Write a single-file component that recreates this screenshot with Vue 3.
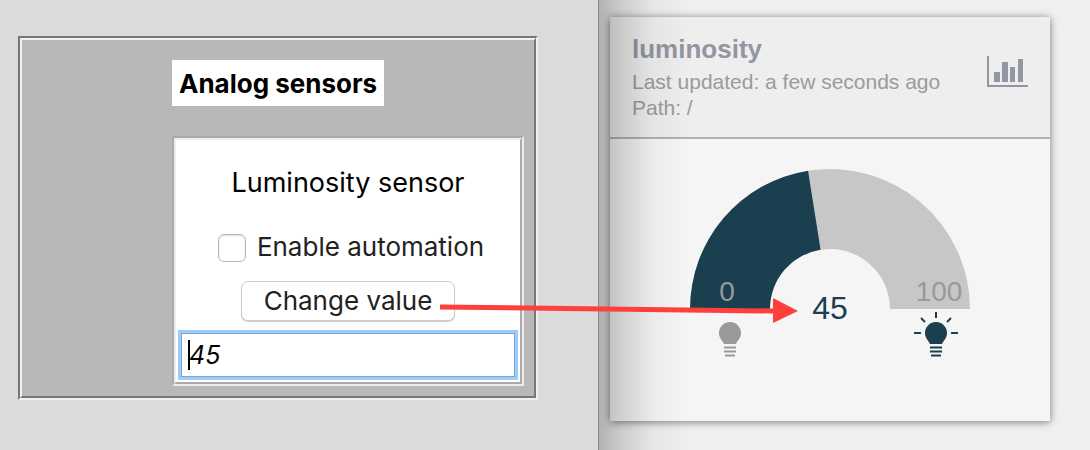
<script setup>
import { ref } from 'vue'

const automated = ref(false)
const value = ref('45')

const point = (radius, percent) => {
  const angle = (Math.PI * percent) / 100
  return `${140 - radius * Math.cos(angle)} ${140 - radius * Math.sin(angle)}`
}
const arc = (from, to) =>
  `M${point(140, from)}A140 140 0 0 1 ${point(140, to)}L${point(60, to)}A60 60 0 0 0 ${point(60, from)}Z`
</script>

<template>
  <main class="page">
    <section class="simulator">
      <div class="groove outer">
        <div class="groove-inner outer-body">
          <h1 class="group-title">Analog sensors</h1>
          <div class="groove sensor">
            <form class="groove-inner sensor-body" @submit.prevent>
              <h2 class="sensor-name">Luminosity sensor</h2>
              <label class="check"><input v-model="automated" type="checkbox" />Enable automation</label>
              <button class="change" type="button">Change value</button>
              <div class="field">
                <input v-model="value" class="value" type="text" aria-label="Luminosity value" />
                <span class="caret"></span>
              </div>
            </form>
          </div>
        </div>
      </div>
    </section>

    <section class="dashboard">
      <article class="card">
        <header class="card-head">
          <div>
            <h2 class="card-title">luminosity</h2>
            <p class="meta">Last updated: a few seconds ago</p>
            <p class="meta">Path: /</p>
          </div>
          <svg class="chart-icon" viewBox="0 0 41 32" aria-hidden="true">
            <path d="M0 0h2v29h39v2H0zM7 16h6v10H7zM15 6h6v20h-6zM23 11h5v15h-5zM31 3h5v23h-5z" />
          </svg>
        </header>
        <div class="card-body">
          <svg class="gauge" viewBox="0 0 280 190" role="img" aria-label="Luminosity 45 of 100">
            <path class="rest" :d="arc(45, 100)" />
            <path class="filled" :d="arc(0, 45)" />
            <text class="limit" x="37" y="132">0</text>
            <text class="limit" x="249" y="132">100</text>
            <text class="reading" x="140" y="150">45</text>
            <g class="bulb off" transform="translate(40 153)">
              <path d="M0 0A11 11 0 0 1 11 11C11 16 8 18 6 22H-6C-8 18-11 16-11 11A11 11 0 0 1 0 0Z" />
              <path class="screw" d="M-6 25.500H6M-6 29.500H6M-5 33.500H5" />
            </g>
            <g class="bulb on" transform="translate(246 153)">
              <path d="M0 0A11 11 0 0 1 11 11C11 16 8 18 6 22H-6C-8 18-11 16-11 11A11 11 0 0 1 0 0Z" />
              <path class="screw" d="M-6 25.500H6M-6 29.500H6M-5 33.500H5M0-4V-10M-11 0L-15-4M11 0L15-4M-15 11H-22M15 11H22" />
            </g>
          </svg>
        </div>
      </article>
      <div class="edge-shade"></div>
    </section>

    <svg class="arrow" viewBox="0 0 358 26" aria-hidden="true">
      <path d="M0 9L334 13" stroke="#ff3f3b" stroke-width="5" />
      <path d="M333 0L358 13L333 25Z" fill="#ff3f3b" />
    </svg>
  </main>
</template>

<style>
body {
  margin: 0;
}
</style>

<style scoped>
* {
  box-sizing: border-box;
}
h1,
h2,
p {
  margin: 0;
}
.page {
  position: relative;
  display: grid;
  grid-template-columns: minmax(0, 599fr) minmax(0, 491fr);
  min-height: 100vh;
}
.simulator {
  padding: 36px 60px 40px 18px;
  background: #dbdbdb;
  border-right: 1px solid #898989;
  font-family: Inter, sans-serif;
}
.groove,
.groove-inner {
  border: 2px solid;
}
.outer {
  border-color: #777 #f1f1f1 #f1f1f1 #777;
}
.outer-body {
  display: flex;
  flex-direction: column;
  align-items: flex-start;
  padding: 20px 10px 10px 150px;
  background: #b8b8b8;
  border-color: #f1f1f1 #777 #777 #f1f1f1;
}
.group-title {
  padding: 2px 7px 0;
  margin-bottom: 30px;
  background: #fff;
  color: #000;
  font-size: 26px;
  font-weight: 700;
  line-height: 44px;
  white-space: nowrap;
}
.sensor {
  align-self: stretch;
  border-color: #aaa #ededed #ededed #aaa;
}
.sensor-body {
  display: flex;
  flex-direction: column;
  align-items: center;
  padding: 25px 2px 2px;
  background: #fff;
  border-color: #ededed #aaa #aaa #ededed;
}
.sensor-name {
  color: #000;
  font-size: 27px;
  font-weight: 400;
  line-height: 36px;
}
.check {
  display: flex;
  align-items: center;
  gap: 11px;
  margin: 28px 0 16px;
  padding-left: 6px;
  color: #222;
  font-size: 26px;
  line-height: 36px;
  white-space: nowrap;
}
.check input {
  appearance: none;
  width: 28px;
  height: 28px;
  margin: 2px 0 0;
  border: 1px solid #b5b5b5;
  border-radius: 6px;
  background: #fff;
  box-shadow: inset 0 1px 2px #ddd;
}
.change {
  width: 214px;
  height: 40px;
  margin-bottom: 9px;
  padding: 0;
  border: 1px solid #ccc;
  border-radius: 7px;
  background: #fff;
  box-shadow: 0 1px 1px #ccc;
  color: #222;
  font: 26px/36px Inter, sans-serif;
}
.field {
  position: relative;
  align-self: stretch;
  padding: 3px;
  background: #a0cafa;
}
.value {
  display: block;
  width: 100%;
  height: 44px;
  padding: 0 7px;
  border: 1px solid #79a7dc;
  outline: none;
  background: #fff;
  color: #000;
  font: italic 25px/42px Inter, sans-serif;
}
.caret {
  position: absolute;
  top: 10px;
  left: 10px;
  width: 2px;
  height: 30px;
  background: #000;
}
.dashboard {
  position: relative;
  padding: 17px 40px 29px 11px;
  background: #f0f0f0;
  font-family: "Liberation Sans", Arial, sans-serif;
}
.card {
  background: #f5f5f5;
  box-shadow: 0 1px 8px #777782;
}
.card-head {
  display: flex;
  justify-content: space-between;
  padding: 16px 22px;
  background: #eee;
  border-bottom: 2px solid #b1b1b1;
}
.card-title {
  margin-bottom: 4px;
  color: #9296a1;
  font-size: 26px;
  font-weight: 700;
  line-height: 32px;
}
.meta {
  color: #9b9b9b;
  font-size: 21px;
  line-height: 26px;
  white-space: nowrap;
}
.chart-icon {
  width: 41px;
  height: 32px;
  margin-top: 23px;
  fill: #9296a1;
}
.card-body {
  display: flex;
  justify-content: center;
  padding: 30px 20px 62px;
}
.gauge {
  width: 280px;
  height: 190px;
  overflow: visible;
}
.rest {
  fill: #c7c7c7;
}
.filled {
  fill: #1a3f4f;
}
.limit {
  fill: #999;
  font-size: 28px;
  text-anchor: middle;
}
.reading {
  fill: #1a3f4f;
  font-size: 32px;
  text-anchor: middle;
}
.off {
  fill: #999;
  stroke: #999;
}
.on {
  fill: #1a3f4f;
  stroke: #1a3f4f;
}
.bulb path {
  stroke-width: 0;
}
.bulb .screw {
  stroke-width: 2;
}
.edge-shade {
  position: absolute;
  inset: 0 auto 0 0;
  width: 90px;
  background: linear-gradient(90deg, rgb(0 0 0 / 26%), rgb(0 0 0 / 15%) 25%, rgb(0 0 0 / 4%) 60%, transparent);
  pointer-events: none;
}
.arrow {
  position: absolute;
  top: 298px;
  left: 440px;
  width: 358px;
  height: 26px;
  pointer-events: none;
}
</style>
